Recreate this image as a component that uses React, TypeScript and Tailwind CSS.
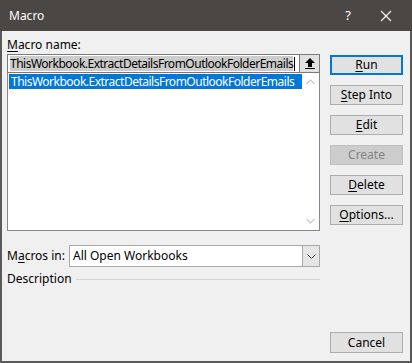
import React from "react";

const font = { fontFamily: '"Segoe UI", "Noto Sans", "Liberation Sans", sans-serif' };

type BtnProps = {
  label: string;
  mnemonic?: number;
  primary?: boolean;
  disabled?: boolean;
};

function Mn({ text, at }: { text: string; at?: number }) {
  if (at === undefined) return <>{text}</>;
  return (
    <>
      {text.slice(0, at)}
      <span className="underline underline-offset-2">{text[at]}</span>
      {text.slice(at + 1)}
    </>
  );
}

function DlgButton({ label, mnemonic, primary, disabled }: BtnProps) {
  let cls = "h-[20px] w-[73px] flex items-center justify-center text-[12px] leading-none ";
  if (primary) cls += "border-2 border-[#0078d7] bg-[#e1e1e1] text-black";
  else if (disabled) cls += "border border-[#bfbfbf] bg-[#cccccc] text-[#838383]";
  else cls += "border border-[#adadad] bg-[#e1e1e1] text-black";
  return (
    <div className={cls}>
      <span className="-mt-[1px]">
        <Mn text={label} at={mnemonic} />
      </span>
    </div>
  );
}

export default function App() {
  const macroName = "ThisWorkbook.ExtractDetailsFromOutlookFolderEmails";

  return (
    <div className="w-[412px] h-[363px] flex flex-col bg-[#f0f0f0] overflow-hidden" style={font}>
      {/* title bar */}
      <div className="h-[31px] bg-[#4a4744] flex items-center text-white">
        <span className="pl-[9px] text-[12px] flex-1">Macro</span>
        <span className="w-[30px] text-center text-[13px]">?</span>
        <div className="w-[46px] flex justify-center">
          <svg width="12" height="12" viewBox="0 0 12 12">
            <path d="M1 1 L11 11 M11 1 L1 11" stroke="#fff" strokeWidth="1.1" />
          </svg>
        </div>
        <span className="w-[3px]" />
      </div>

      {/* body */}
      <div className="flex-1 flex border-l-2 border-r-2 border-b-2 border-[#5a5a5a] pl-[5px]">
        {/* left column */}
        <div className="w-[313px] flex flex-col">
          <div className="pt-[6px] h-[23px] text-[12px] leading-[16px] text-black">
            <Mn text="Macro name:" at={0} />
          </div>
          <div className="h-[19px] flex">
            <div className="flex-1 border border-[#7a7a7a] bg-white flex items-center pl-[2px] pr-[1px] overflow-hidden">
              <span className="bg-[#cccccc] text-black text-[12px] leading-[15px] tracking-[-0.5px] whitespace-nowrap">
                {macroName}
              </span>
              <span className="w-[1px] h-[14px] bg-black ml-[1px]" />
            </div>
            <div className="w-[20px] border border-l-0 border-[#7a7a7a] bg-[#e1e1e1] flex items-center justify-center">
              <svg width="10" height="11" viewBox="0 0 10 11">
                <path d="M5 0 L10 5 L7 5 L7 9 L3 9 L3 5 L0 5 Z" fill="#000" />
                <rect x="0" y="10" width="10" height="1" fill="#000" />
              </svg>
            </div>
          </div>
          <div className="h-[158px] border border-t-0 border-[#828790] bg-white flex">
            <div className="flex-1 pt-[1px] pl-[1px]">
              <div className="h-[15px] bg-[#0078d7] text-white text-[12px] leading-[15px] pl-[2px] tracking-[-0.5px] whitespace-nowrap overflow-hidden">
                {macroName}
              </div>
            </div>
            <div className="w-[17px] flex flex-col justify-between items-center py-[6px]">
              <svg width="9" height="6" viewBox="0 0 9 6">
                <path d="M0.5 5 L4.5 1 L8.5 5" stroke="#c8c8c8" strokeWidth="1.2" fill="none" />
              </svg>
              <svg width="9" height="6" viewBox="0 0 9 6">
                <path d="M0.5 1 L4.5 5 L8.5 1" stroke="#c8c8c8" strokeWidth="1.2" fill="none" />
              </svg>
            </div>
          </div>

          <div className="mt-[14px] h-[22px] flex items-center">
            <div className="w-[62px] text-[12px] text-black">
              <Mn text="Macros in:" at={1} />
            </div>
            <div className="flex-1 h-[22px] flex border border-[#a8a8a8] bg-white">
              <div className="flex-1 flex items-center pl-[3px] text-[12px] text-black">All Open Workbooks</div>
              <div className="w-[17px] bg-[#e5e5e5] border-l border-[#a8a8a8] flex items-center justify-center">
                <svg width="9" height="5" viewBox="0 0 9 5">
                  <path d="M0.5 0.5 L4.5 4.5 L8.5 0.5" stroke="#444" strokeWidth="1" fill="none" />
                </svg>
              </div>
            </div>
          </div>

          <div className="mt-[2px] h-[20px] flex items-center">
            <span className="text-[12px] text-black pr-[4px]">Description</span>
            <div className="flex-1 h-[1px] bg-[#d5d5d5]" />
          </div>
        </div>

        {/* right column */}
        <div className="ml-[10px] w-[73px] flex flex-col">
          <div className="pt-[24px] flex flex-col gap-[10px]">
            <DlgButton label="Run" mnemonic={0} primary />
            <DlgButton label="Step Into" mnemonic={0} />
            <DlgButton label="Edit" mnemonic={0} />
            <DlgButton label="Create" disabled />
            <DlgButton label="Delete" mnemonic={0} />
            <DlgButton label="Options..." mnemonic={0} />
          </div>
          <div className="mt-auto mb-[8px]">
            <div className="h-[21px] w-[73px] flex items-center justify-center text-[12px] border border-[#adadad] bg-[#e1e1e1] text-black">
              Cancel
            </div>
          </div>
        </div>
      </div>
    </div>
  );
}
